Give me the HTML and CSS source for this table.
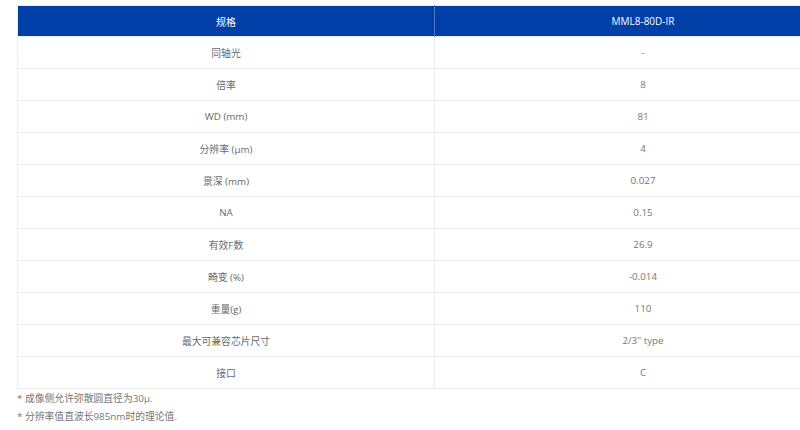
FILE: index.html
```html
<!DOCTYPE html>
<html lang="zh">
<head>
<meta charset="utf-8">
<link rel="stylesheet" href="styles.css">
</head>
<body>
<div class="wrap">
  <table class="spec">
    <thead>
      <tr><th>规格</th><th>MML8-80D-IR</th></tr>
    </thead>
    <tbody>
      <tr><td>同轴光</td><td>-</td></tr>
      <tr><td>倍率</td><td>8</td></tr>
      <tr><td>WD (mm)</td><td>81</td></tr>
      <tr><td>分辨率 (μm)</td><td>4</td></tr>
      <tr><td>景深 (mm)</td><td>0.027</td></tr>
      <tr><td>NA</td><td>0.15</td></tr>
      <tr><td>有效F数</td><td>26.9</td></tr>
      <tr><td>畸变 (%)</td><td>-0.014</td></tr>
      <tr><td>重量(g)</td><td>110</td></tr>
      <tr><td>最大可兼容芯片尺寸</td><td>2/3" type</td></tr>
      <tr><td>接口</td><td>C</td></tr>
    </tbody>
  </table>
  <div class="notes">
    <p>* 成像侧允许弥散圆直径为30μ.</p>
    <p>* 分辨率值直波长985nm时的理论值.</p>
  </div>
</div>
</body>
</html>
```
FILE: styles.css
```css
html, body {
  margin: 0;
  padding: 0;
  overflow: hidden;
  background: #fff;
}
body {
  font-family: "Open Sans", "Noto Sans CJK SC", sans-serif;
  font-size: 9.8px;
  color: #777;
}
.wrap {
  padding: 5px 0 0 17px;
  overflow: hidden;
}
.spec {
  border-collapse: collapse;
  width: 835px;
  table-layout: fixed;
  border: 1px solid #eee;
}
.spec th {
  background: #003ea8;
  color: #fff;
  font-weight: normal;
  font-size: 10px;
  height: 30px;
  padding: 0;
  text-align: center;
  border-left: 1px solid #4f78c4;
}
.spec th:first-child {
  border-left: none;
}
.spec td {
  height: 31px;
  padding: 0;
  text-align: center;
  border-top: 1px solid #eee;
  border-left: 1px solid #eee;
  color: #777;
}
.spec td:first-child {
  border-left: none;
  color: #6a6a6a;
}
.notes {
  padding-top: 1px;
}
.notes p {
  margin: 0;
  line-height: 18px;
  color: #777;
}
```
